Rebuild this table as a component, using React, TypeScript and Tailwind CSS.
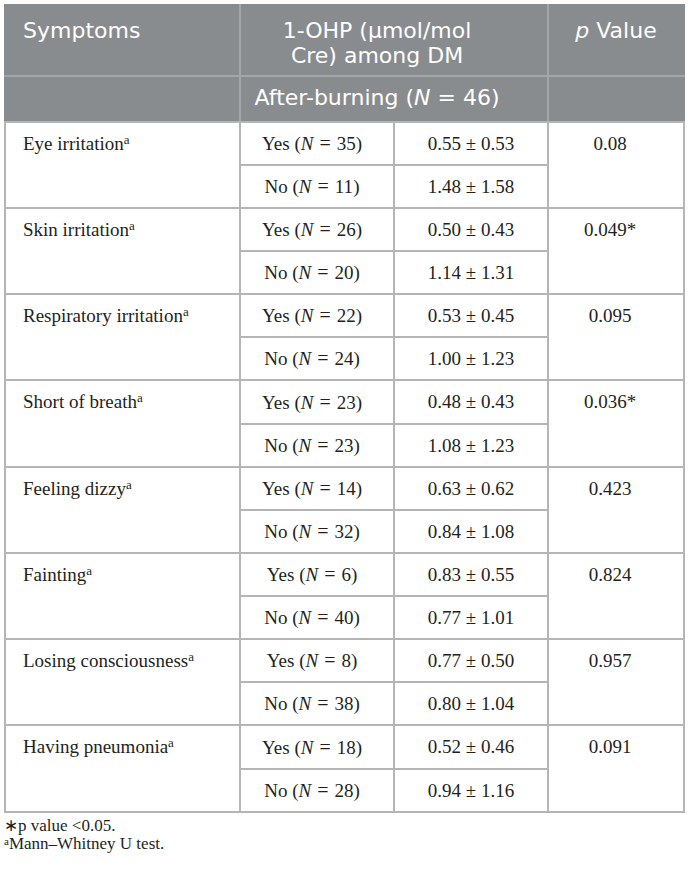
import React from "react"

type Group = {
    symptom: string
    yes: number
    no: number
    yesVal: string
    noVal: string
    p: string
}

const groups: Group[] = [
    { symptom: "Eye irritation", yes: 35, no: 11, yesVal: "0.55 ± 0.53", noVal: "1.48 ± 1.58", p: "0.08" },
    { symptom: "Skin irritation", yes: 26, no: 20, yesVal: "0.50 ± 0.43", noVal: "1.14 ± 1.31", p: "0.049*" },
    { symptom: "Respiratory irritation", yes: 22, no: 24, yesVal: "0.53 ± 0.45", noVal: "1.00 ± 1.23", p: "0.095" },
    { symptom: "Short of breath", yes: 23, no: 23, yesVal: "0.48 ± 0.43", noVal: "1.08 ± 1.23", p: "0.036*" },
    { symptom: "Feeling dizzy", yes: 14, no: 32, yesVal: "0.63 ± 0.62", noVal: "0.84 ± 1.08", p: "0.423" },
    { symptom: "Fainting", yes: 6, no: 40, yesVal: "0.83 ± 0.55", noVal: "0.77 ± 1.01", p: "0.824" },
    { symptom: "Losing consciousness", yes: 8, no: 38, yesVal: "0.77 ± 0.50", noVal: "0.80 ± 1.04", p: "0.957" },
    { symptom: "Having pneumonia", yes: 18, no: 28, yesVal: "0.52 ± 0.46", noVal: "0.94 ± 1.16", p: "0.091" },
]

const sans = "font-['DejaVu_Sans',sans-serif]"
const serif = "font-['Liberation_Serif',serif]"

function Count({ label, n }: { label: string; n: number }) {
    return (
        <>
            {label} (<i>N</i>
            <span className="mx-[6px] text-[20px]">=</span>
            {n})
        </>
    )
}

function Note() {
    return <span className="relative -top-[6px] text-[13px] leading-none">a</span>
}

export default function App() {
    return (
        <div className="w-[688px] h-[874px] bg-white pt-1 pl-1 text-[#231f20]">
            <table className="w-[679px] table-fixed border-collapse">
                <colgroup>
                    <col className="w-[235px]" />
                    <col className="w-[154px]" />
                    <col className="w-[154px]" />
                    <col className="w-[136px]" />
                </colgroup>
                <thead className={`${sans} bg-[#898c8e] text-white text-[22px] leading-[25px]`}>
                    <tr className="h-[71px]">
                        <th className="border-2 border-[#a3a6a8] border-t-[#898c8e] border-l-[#898c8e] text-left align-top font-normal pl-[17px] pt-[12px]">
                            Symptoms
                        </th>
                        <th colSpan={2} className="border-2 border-[#a3a6a8] border-t-[#898c8e] text-center align-top font-normal pt-[12px] pr-[34px]">
                            1-OHP (μmol/mol
                            <br />
                            Cre) among DM
                        </th>
                        <th className="border-2 border-[#a3a6a8] border-t-[#898c8e] border-r-[#898c8e] text-center align-top font-normal pt-[12px]">
                            <i>p</i> Value
                        </th>
                    </tr>
                    <tr className="h-[46px]">
                        <th className="border-2 border-[#a3a6a8] border-l-[#898c8e] border-b-[#b5b5b5]" />
                        <th colSpan={2} className="border-2 border-[#a3a6a8] border-b-[#b5b5b5] text-center font-normal pr-[34px] pb-[3px]">
                            After-burning (<i>N</i> = 46)
                        </th>
                        <th className="border-2 border-[#a3a6a8] border-r-[#898c8e] border-b-[#b5b5b5]" />
                    </tr>
                </thead>
                <tbody className={`${serif} text-[19px] leading-[22px]`}>
                    {groups.map((g, i) => (
                        <React.Fragment key={g.symptom}>
                            <tr className={i % 4 === 3 ? "h-[44px]" : "h-[43px]"}>
                                <td rowSpan={2} className="border-2 border-[#b5b5b5] align-top pl-[17px] pt-[10px]">
                                    {g.symptom}
                                    <Note />
                                </td>
                                <td className="border-2 border-[#b5b5b5] text-center pr-[10px]">
                                    <Count label="Yes" n={g.yes} />
                                </td>
                                <td className="border-2 border-[#b5b5b5] text-center">{g.yesVal}</td>
                                <td rowSpan={2} className="border-2 border-[#b5b5b5] text-center align-top pt-[10px] pr-[12px]">
                                    {g.p}
                                </td>
                            </tr>
                            <tr className="h-[43px]">
                                <td className="border-2 border-[#b5b5b5] text-center pr-[10px]">
                                    <Count label="No" n={g.no} />
                                </td>
                                <td className="border-2 border-[#b5b5b5] text-center">{g.noVal}</td>
                            </tr>
                        </React.Fragment>
                    ))}
                </tbody>
            </table>
            <div className={`${serif} text-[17px] leading-[18px] mt-[4px]`}>
                <p>∗p value &lt;0.05.</p>
                <p>
                    <span className="relative -top-[4px] text-[11px] leading-none">a</span>Mann–Whitney U test.
                </p>
            </div>
        </div>
    )
}
